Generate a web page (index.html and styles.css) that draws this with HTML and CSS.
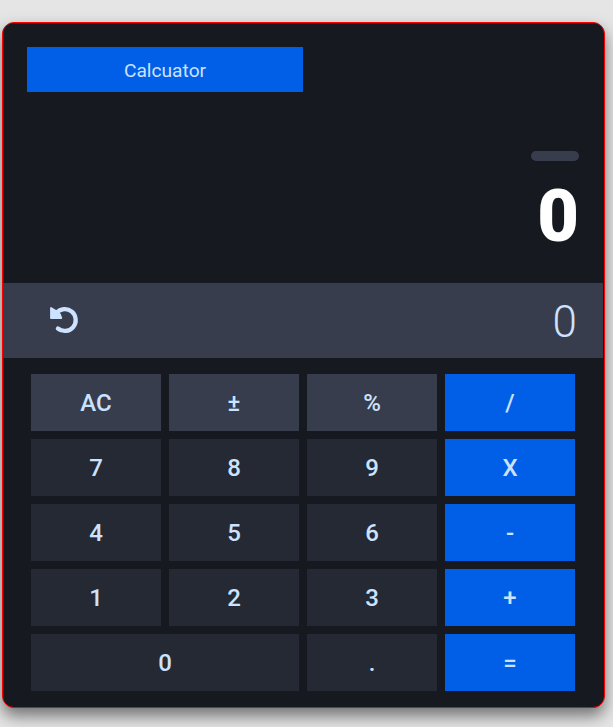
FILE: index.html
```html
<!DOCTYPE html>
<html lang="en">
<head>
<meta charset="utf-8">
<title>Calcuator</title>
<link rel="stylesheet" href="styles.css">
</head>
<body>
<main class="calculator">
  <header class="title">Calcuator</header>
  <section class="display">
    <div class="handle"></div>
    <div class="result">0</div>
  </section>
  <section class="history">
    <svg class="undo" viewBox="0 0 30 30" aria-hidden="true">
      <path class="undo-arc" d="M7.5 8A10.9 10.9 0 1 1 8.9 23.5"/>
      <path class="undo-head" d="M2 3V13H12.3L11 9.5L7 6Z"/>
    </svg>
    <div class="previous">0</div>
  </section>
  <section class="keys">
    <button class="key function">AC</button>
    <button class="key function">±</button>
    <button class="key function">%</button>
    <button class="key operator">/</button>
    <button class="key">7</button>
    <button class="key">8</button>
    <button class="key">9</button>
    <button class="key operator">X</button>
    <button class="key">4</button>
    <button class="key">5</button>
    <button class="key">6</button>
    <button class="key operator">-</button>
    <button class="key">1</button>
    <button class="key">2</button>
    <button class="key">3</button>
    <button class="key operator">+</button>
    <button class="key wide">0</button>
    <button class="key">.</button>
    <button class="key operator">=</button>
  </section>
</main>
</body>
</html>
```

FILE: styles.css
```css
* {
  box-sizing: border-box;
}

body {
  margin: 0;
  padding: 22px 8px 0 2px;
  height: 727px;
  overflow: hidden;
  background: #e5e5e5;
  font-family: Roboto, sans-serif;
  color: #cce2ff;
}

.calculator {
  display: flex;
  flex-direction: column;
  width: 603px;
  height: 686px;
  border: 1px solid #f00;
  border-radius: 12px;
  background: #161920;
  box-shadow: 0 8px 16px rgba(0, 0, 0, 0.5);
}

.title {
  width: 276px;
  height: 45px;
  margin: 24px 0 0 24px;
  background: #005fe6;
  font-size: 19.2px;
  line-height: 47px;
  text-align: center;
}

.display {
  display: flex;
  flex-direction: column;
  align-items: flex-end;
  height: 191px;
  padding: 59px 25px 0 0;
}

.handle {
  width: 48px;
  height: 10px;
  border-radius: 5px;
  background: #373d4c;
}

.result {
  margin-top: 14px;
  color: #fff;
  font-size: 72px;
  font-weight: 900;
  line-height: 84px;
}

.history {
  display: flex;
  align-items: center;
  justify-content: space-between;
  width: 600px;
  height: 75px;
  padding: 0 26px 0 46px;
  background: #373d4c;
}

.undo {
  width: 30px;
  height: 30px;
  margin-bottom: 1px;
  stroke: #cce2ff;
  stroke-linecap: round;
  stroke-linejoin: round;
}

.undo-arc {
  fill: none;
  stroke-width: 4.3;
}

.undo-head {
  fill: #cce2ff;
  stroke-width: 1.8;
}

.previous {
  padding-top: 3px;
  font-size: 44px;
  font-weight: 300;
  line-height: 72px;
}

.keys {
  display: grid;
  grid-template-columns: repeat(4, 130px);
  grid-auto-rows: 57px;
  gap: 8px;
  padding: 16px 28px;
}

.key {
  padding: 0;
  border: 0;
  background: #252933;
  color: #cce2ff;
  font: 500 24px Roboto, sans-serif;
}

.function {
  background: #373d4c;
}

.operator {
  background: #005fe6;
}

.wide {
  grid-column: span 2;
}
```
